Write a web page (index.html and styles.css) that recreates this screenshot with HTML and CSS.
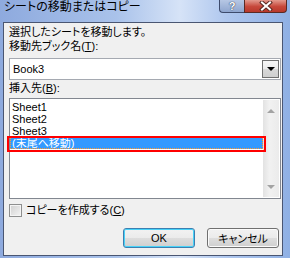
FILE: index.html
```html
<!DOCTYPE html>
<html lang="ja">
<head>
  <meta charset="UTF-8" />
  <title>シートの移動またはコピー</title>
  <link rel="stylesheet" href="styles.css">
</head>
<body>

  <div class="window">
    <div class="titlebar">
      <span class="title">シートの移動またはコピー</span>
      <div class="caption">
        <span class="cap-help">?</span>
        <span class="cap-close">
          <svg width="14" height="10" viewBox="0 0 14 10">
            <path d="M3 1.5 L11 8.5 M11 1.5 L3 8.5" stroke="#5a2a24" stroke-width="4" stroke-linecap="square"/>
            <path d="M3 1.5 L11 8.5 M11 1.5 L3 8.5" stroke="#fff" stroke-width="2" stroke-linecap="square"/>
          </svg>
        </span>
      </div>
    </div>

    <div class="client">
      <p class="line">選択したシートを移動します。</p>
      <p class="line">移動先ブック名(<u>T</u>):</p>

      <div class="combo">
        <span class="combo-value">Book3</span>
        <span class="combo-btn"><span class="tri-down"></span></span>
      </div>

      <p class="line list-label">挿入先(<u>B</u>):</p>

      <div class="listbox">
        <ul class="items">
          <li>Sheet1</li>
          <li>Sheet2</li>
          <li>Sheet3</li>
          <li class="selected">(末尾へ移動)</li>
        </ul>
        <div class="scrollbar">
          <span class="arrow up"></span>
          <span class="arrow down"></span>
        </div>
        <div class="marker"></div>
      </div>

      <label class="check"><span class="box"></span>コピーを作成する(<u>C</u>)</label>

      <div class="buttons">
        <button class="btn default">OK</button>
        <button class="btn">キャンセル</button>
      </div>
    </div>
  </div>

</body>
</html>
```

FILE: styles.css
```css
body { margin: 0; font-family: "Liberation Sans", "Noto Sans CJK JP", sans-serif; font-size: 11px; color: #000; font-feature-settings: "palt"; }

.window { width: 290px; height: 258px; box-sizing: border-box; padding: 0 7px 2px 3px; display: flex; flex-direction: column;
  background: linear-gradient(to right, #8eaade 0%, #a9c2ea 40%, #d6e3f7 62%, #afc7ee 78%, #8fb0e4 100%); }

.titlebar { height: 22px; display: flex; justify-content: space-between; align-items: flex-start; flex-shrink: 0; }
.title { font-size: 12px; line-height: 15px; padding-left: 1px; color: #000; }
.caption { display: flex; margin-right: -4px; }
.cap-help { width: 25px; height: 13px; box-sizing: border-box; border: 1px solid #3d4b6c; border-top: none; border-right: none; border-radius: 0 0 0 4px;
  background: linear-gradient(#b6c7e4, #8fa6cf); color: #fff; font-weight: bold; font-size: 11px; line-height: 12px; text-align: center;
  text-shadow: 0 0 1px #2a3550, 0 0 1px #2a3550; }
.cap-close { width: 43px; height: 13px; box-sizing: border-box; border: 1px solid #5a2a24; border-top: none; border-radius: 0 0 4px 0;
  background: linear-gradient(#e39a8e, #c6473a 55%, #b8392c); display: flex; justify-content: center; align-items: center; }

.client { flex: 1; background: #f0f0f0; border: 1px solid #4a5672; padding: 2px 1px 0 5px; display: flex; flex-direction: column; }

.line { margin: 0; line-height: 14px; }
.list-label { margin-top: 1px; }

.combo { margin-top: 5px; height: 22px; box-sizing: border-box; border: 1px solid #a5a9b1; background: #fff; display: flex; align-items: center; }
.combo-value { flex: 1; padding-left: 3px; }
.combo-btn { width: 17px; height: 18px; box-sizing: border-box; margin-right: 1px; border: 1px solid #6f6f6f;
  background: linear-gradient(#f6f6f6 0%, #ebebeb 50%, #d8d8d8 51%, #cfcfcf 100%); display: flex; justify-content: center; align-items: center; }
.tri-down { width: 0; height: 0; border-left: 4px solid transparent; border-right: 4px solid transparent; border-top: 4px solid #000; }

.listbox { position: relative; margin-top: 3px; height: 101px; box-sizing: border-box; border: 1px solid #828790; background: #fff; display: flex; }
.items { flex: 1; list-style: none; margin: 0; padding: 2px 0 0; }
.items li { line-height: 12px; height: 12px; padding-left: 2px; }
.items .selected { background: #3399ff; color: #fff; outline: 1px dotted #ff9a2e; outline-offset: -1px; }
.scrollbar { width: 16px; margin: 1px 1px 1px 0; background: linear-gradient(to right, #e2e2e2, #f1f1f1 40%, #ebebeb); display: flex; flex-direction: column; justify-content: space-between; align-items: center; padding: 9px 0 8px; box-sizing: border-box; }
.arrow { width: 0; height: 0; border-left: 4px solid transparent; border-right: 4px solid transparent; }
.arrow.up { border-bottom: 4px solid #a3a3a3; }
.arrow.down { border-top: 4px solid #a3a3a3; }
.marker { position: absolute; left: -3px; top: 37px; width: 259px; height: 16px; box-sizing: border-box; border: 2px solid #ff0000; }

.check { margin-top: 5px; display: flex; align-items: center; line-height: 13px; }
.box { width: 13px; height: 13px; box-sizing: border-box; border: 1px solid #8e8f8f; margin-right: 4px;
  background: linear-gradient(135deg, #cfcfcf, #f4f4f4); box-shadow: inset 0 0 0 1px #f4f4f4; }

.buttons { margin-top: 11px; margin-right: 2px; display: flex; justify-content: flex-end; gap: 12px; }
.btn { width: 72px; height: 20px; box-sizing: border-box; border: 1px solid #707070; border-radius: 3px; padding: 0;
  font-family: inherit; font-size: 11px; color: #000; font-feature-settings: "palt";
  background: linear-gradient(#f2f2f2 0%, #ebebeb 50%, #dddddd 51%, #cfcfcf 100%); box-shadow: inset 0 0 0 1px #fbfbfb; }
.btn.default { border-color: #3c7fb1; box-shadow: inset 0 0 0 1px #48d2f8; }
```
